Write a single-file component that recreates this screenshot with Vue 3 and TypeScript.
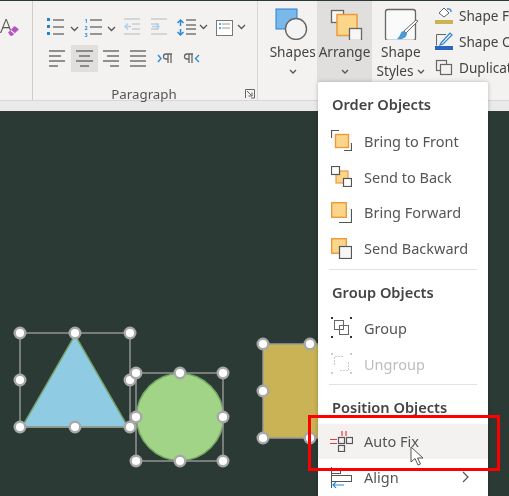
<script setup lang="ts">
type Pt = [number, number];

const handles: Pt[] = [
  [20, 333], [75, 333], [130, 333], [20, 380], [130, 380], [20, 427], [75, 427], [130, 427],
  [136, 373], [180, 373], [223, 373], [136, 417], [223, 417], [136, 461], [180, 461], [223, 461],
  [263, 344], [310, 344], [263, 391], [263, 438], [310, 438],
];

const alignRows: { active?: boolean; lines: [number, number][] }[] = [
  { lines: [[5, 21], [5, 17], [5, 21], [5, 14]] },
  { active: true, lines: [[5, 22], [8, 19], [5, 22], [9, 18]] },
  { lines: [[5, 21], [9, 21], [5, 21], [12, 21]] },
  { lines: [[5, 21], [5, 21], [5, 21], [5, 21]] },
];
</script>

<template>
  <div class="page">
    <header class="ribbon">
      <div class="font-stub">
        <span class="big-a">A</span>
        <svg class="eraser" width="13" height="13" viewBox="0 0 12 12">
          <path d="M1 7 7 1l4 3-6 6H3z" fill="#b455c4" />
          <path d="M3.500 5 7 8" stroke="#fff" stroke-width="1" />
        </svg>
      </div>

      <section class="para">
        <div class="para-row top">
          <svg width="37" height="24" viewBox="0 0 37 24">
            <path d="M3 6h3v3H3zM3 13h3v3H3zM3 20h3v3H3z" fill="#1f86d6" transform="translate(0 -3)" />
            <path d="M9 5h11M9 12h11M9 19h11" stroke="#777" stroke-width="1.600" />
            <path d="M27 12l3.500 3.500L34 12" class="chev" />
          </svg>
          <svg width="37" height="24" viewBox="0 0 37 24">
            <text x="3.500" y="7.500" class="digit">1</text>
            <text x="3.500" y="14.500" class="digit">2</text>
            <text x="3.500" y="21.500" class="digit">3</text>
            <path d="M9 5h12M9 12h12M9 19h12" stroke="#777" stroke-width="1.600" />
            <path d="M27 12l3.500 3.500L34 12" class="chev" />
          </svg>
          <svg width="28" height="24" viewBox="0 0 28 24">
            <path d="M6 4h16M14 9h8M14 14h8M6 19h16" stroke="#ccc" stroke-width="1.600" />
            <path d="M13 11.500H7M10 8.500l-3 3 3 3" stroke="#a9d2f0" stroke-width="1.500" fill="none" />
          </svg>
          <svg width="28" height="24" viewBox="0 0 28 24">
            <path d="M5 4h16M5 9h8M5 14h8M5 19h16" stroke="#ccc" stroke-width="1.600" />
            <path d="M6 11.500h7M10 8.500l3 3-3 3" stroke="#a9d2f0" stroke-width="1.500" fill="none" />
          </svg>
          <svg width="37" height="24" viewBox="0 0 37 24">
            <path d="M6.500 5v6M6.500 14v6M3.500 8l3-3 3 3M3.500 17l3 3 3-3" stroke="#2a8bd8" stroke-width="1.500" fill="none" />
            <path d="M12 5h10M12 10h10M12 14h10M12 19h10" stroke="#777" stroke-width="1.600" />
            <path d="M26 10l3.500 3.500L33 10" class="chev" />
          </svg>
          <svg width="37" height="24" viewBox="0 0 37 24">
            <rect x="5.500" y="5.500" width="16" height="15" fill="#fff" stroke="#777" />
            <path d="M8 9h2M8 13h2" stroke="#2a8bd8" stroke-width="1.500" />
            <path d="M11 9h8M11 13h8" stroke="#999" />
            <path d="M27 10l3.500 3.500L34 10" class="chev" />
          </svg>
        </div>

        <div class="para-row">
          <div v-for="(row, i) in alignRows" :key="i" class="align-btn" :class="{ active: row.active }">
            <svg width="27" height="27" viewBox="0 0 27 27">
              <path
                v-for="(l, n) in row.lines"
                :key="n"
                :d="`M${l[0]} ${6 + n * 5}H${l[1]}`"
                stroke="#666"
                stroke-width="1.400"
              />
            </svg>
          </div>
          <div class="align-btn">
            <svg width="27" height="27" viewBox="0 0 27 27">
              <path d="M6 10l3 3.500-3 3.500" stroke="#2a8bd8" stroke-width="1.400" fill="none" />
              <path d="M16 9v9M19 9v9M20 9h-6a2.500 2.500 0 0 0 0 5h2" stroke="#666" stroke-width="1.300" fill="none" />
            </svg>
          </div>
          <div class="align-btn">
            <svg width="27" height="27" viewBox="0 0 27 27">
              <path d="M10 9v9M13 9v9M14 9H8a2.500 2.500 0 0 0 0 5h2" stroke="#666" stroke-width="1.300" fill="none" />
              <path d="M20 10l-3.500 3.500L20 17" stroke="#2a8bd8" stroke-width="1.400" fill="none" />
            </svg>
          </div>
        </div>

        <div class="para-label">Paragraph</div>
        <svg class="launcher" width="10" height="10" viewBox="0 0 10 10">
          <path d="M.5 9V.5H9.500V9H6M2 2l5 5M7 3.500V7H3.500" stroke="#666" fill="none" />
        </svg>
      </section>

      <section class="drawing">
        <div class="big-btn shapes">
          <svg width="36" height="36" viewBox="0 0 36 36">
            <rect x="1" y="5" width="21" height="20" fill="#79b8ea" stroke="#2a80cc" />
            <circle cx="21" cy="25" r="10.500" fill="#f4f4f4" stroke="#666" stroke-width="1.400" />
          </svg>
          <span>Shapes</span>
          <svg class="small-chev" width="8" height="6" viewBox="0 0 8 6"><path d="M1 1l3 3 3-3" class="chev" /></svg>
        </div>

        <div class="big-btn arrange">
          <svg width="36" height="36" viewBox="0 0 36 36">
            <rect x="4.500" y="6.500" width="12" height="12" fill="#f7f7f7" stroke="#666" stroke-width="1.300" />
            <rect x="10" y="10.500" width="20" height="21" fill="#fbd68a" stroke="#ee9a3a" stroke-width="1.500" />
            <rect x="22.500" y="24.500" width="12" height="12" fill="#f7f7f7" stroke="#666" stroke-width="1.300" />
          </svg>
          <span>Arrange</span>
          <svg class="small-chev" width="8" height="6" viewBox="0 0 8 6"><path d="M1 1l3 3 3-3" class="chev" /></svg>
        </div>

        <div class="big-btn styles">
          <svg width="44" height="36" viewBox="0 0 44 36">
            <rect x="6.500" y="5.500" width="30" height="31" rx="2.500" fill="#fafafa" stroke="#666" stroke-width="1.300" />
            <path d="M39 17 27 29l-2-2 12-11z" fill="#fff" stroke="#666" />
            <path d="M25 27c-4 0-3 5-7 8 5 1 10-1 10-6z" fill="#4a9ad8" />
          </svg>
          <span>Shape</span>
          <span class="styles-line">Styles
            <svg width="8" height="6" viewBox="0 0 8 6"><path d="M1 1l3 3 3-3" class="chev" /></svg>
          </span>
        </div>

        <ul class="side-list">
          <li>
            <svg width="19" height="20" viewBox="0 0 19 20">
              <path d="M4 8l5-5 5 5-5 4z" fill="#fff" stroke="#666" />
              <path d="M12 4q4-1 4 3" fill="none" stroke="#2a80cc" stroke-width="1.300" />
              <rect x="0" y="15" width="18" height="4" fill="#c9b354" />
            </svg>
            <span>Shape Fill</span>
          </li>
          <li>
            <svg width="19" height="20" viewBox="0 0 19 20">
              <path d="M1.500 14.500V3.500H11" fill="none" stroke="#666" />
              <path d="M6 12 15 2l2 2-9 9-3 1z" fill="#fff" stroke="#2a80cc" stroke-width="1.200" />
              <rect x="0" y="15" width="18" height="4" fill="#2d65c4" />
            </svg>
            <span>Shape Outline</span>
          </li>
          <li>
            <svg width="19" height="20" viewBox="0 0 19 20">
              <rect x="1.500" y="3.500" width="10" height="10" fill="none" stroke="#666" stroke-width="1.200" />
              <rect x="5.500" y="7.500" width="11" height="10" fill="#f3f2f1" stroke="#666" stroke-width="1.200" />
            </svg>
            <span>Duplicate</span>
          </li>
        </ul>
      </section>
    </header>
    <div class="ribbon-foot"></div>

    <main class="canvas">
      <svg class="slide" width="509" height="496" viewBox="0 0 509 496">
        <path d="M75 335 22 427h106z" fill="#8fcbe2" stroke="#75a068" stroke-width="1.500" />
        <circle cx="180" cy="417" r="43.500" fill="#a1d486" stroke="#74a862" stroke-width="1.500" />
        <rect x="263" y="344" width="70" height="94" fill="#c9b354" />
        <g fill="none" stroke="#9a9a9a" stroke-width="1.400">
          <rect x="20" y="333" width="110" height="94" />
          <rect x="136" y="373" width="87" height="88" />
          <path d="M318 344H263V438H318" />
        </g>
        <circle
          v-for="(h, i) in handles"
          :key="i"
          :cx="h[0]"
          :cy="h[1]"
          r="5.300"
          fill="#fff"
          stroke="#a8a8a8"
          stroke-width="2.400"
        />
      </svg>
    </main>

    <nav class="menu">
      <h4 class="first">Order Objects</h4>
      <div class="item">
        <svg width="21" height="21" viewBox="0 0 21 21">
          <path d="M.5 8V.5H8M20.500 13v7.500H13" fill="none" stroke="#555" stroke-width="1.200" />
          <rect x="4.500" y="4.500" width="13" height="13" fill="#fbd68a" stroke="#ee9a3a" stroke-width="1.400" />
        </svg>
        <span>Bring to Front</span>
      </div>
      <div class="item">
        <svg width="21" height="21" viewBox="0 0 21 21">
          <rect x="5" y="5" width="12" height="12" fill="#fbd68a" stroke="#ee9a3a" stroke-width="1.200" />
          <rect x=".5" y=".5" width="8" height="8" fill="#fff" stroke="#555" stroke-width="1.200" />
          <rect x="12.500" y="12.500" width="8" height="8" fill="#fff" stroke="#555" stroke-width="1.200" />
        </svg>
        <span>Send to Back</span>
      </div>
      <div class="item">
        <svg width="21" height="21" viewBox="0 0 21 21">
          <path d="M20.500 7v13.500H8" fill="none" stroke="#555" stroke-width="1.200" />
          <rect x=".7" y=".7" width="14.600" height="14.600" fill="#fbd68a" stroke="#ee9a3a" stroke-width="1.400" />
        </svg>
        <span>Bring Forward</span>
      </div>
      <div class="item">
        <svg width="21" height="21" viewBox="0 0 21 21">
          <rect x=".7" y=".7" width="14.600" height="14.600" fill="#fbd68a" stroke="#ee9a3a" stroke-width="1.400" />
          <rect x="8.500" y="8.500" width="12" height="12" fill="#f6f6f6" stroke="#555" stroke-width="1.200" />
        </svg>
        <span>Send Backward</span>
      </div>
      <hr class="sep-a" />

      <h4 class="second">Group Objects</h4>
      <div class="item">
        <svg width="21" height="21" viewBox="0 0 21 21">
          <rect x="3.500" y="3.500" width="9" height="9" fill="none" stroke="#666" />
          <rect x="8.500" y="8.500" width="9" height="9" fill="none" stroke="#666" />
          <path d="M0 0h2v2H0zM19 0h2v2h-2zM0 19h2v2H0zM19 19h2v2h-2z" fill="#333" />
        </svg>
        <span>Group</span>
      </div>
      <div class="item disabled">
        <svg width="21" height="21" viewBox="0 0 21 21">
          <path d="M3.500 12V3.500H12M9 17.500h8.500V9" fill="none" stroke="#ccc" stroke-dasharray="2 1" />
          <path d="M0 0h2v2H0zM19 0h2v2h-2zM0 19h2v2H0zM19 19h2v2h-2z" fill="#ccc" />
        </svg>
        <span>Ungroup</span>
      </div>
      <hr class="sep-b" />

      <h4 class="third">Position Objects</h4>
      <div class="item hover">
        <svg class="wide" width="23" height="21" viewBox="0 0 23 21">
          <path d="M0 8.500h7M0 12.500h7M12 0v5M16 0v5" stroke="#f03a3a" stroke-width="1.200" />
          <rect x="8.500" y="6.500" width="6" height="6" fill="none" stroke="#555" stroke-width="1.200" />
          <rect x="16.500" y="6.500" width="6" height="6" fill="none" stroke="#555" stroke-width="1.200" />
          <rect x="8.500" y="14.500" width="6" height="6" fill="none" stroke="#555" stroke-width="1.200" />
        </svg>
        <span>Auto Fix</span>
      </div>
      <div class="item">
        <svg class="wide" width="23" height="21" viewBox="0 0 23 21">
          <path d="M1.500 0v21" stroke="#555" />
          <rect x="1.500" y="2.500" width="9" height="4" fill="none" stroke="#555" />
          <rect x="1.500" y="8.500" width="20" height="6" fill="none" stroke="#555" />
          <path d="M14 18H3M6 15l-3 3 3 3" stroke="#2a8bd8" fill="none" stroke-width="1.200" />
        </svg>
        <span class="grow">Align</span>
        <svg class="more" width="8" height="12" viewBox="0 0 8 12"><path d="M1 1l5 5-5 5" fill="none" stroke="#555" stroke-width="1.200" /></svg>
      </div>
    </nav>

    <div class="red-box"></div>
    <svg class="pointer" width="14" height="21" viewBox="0 0 14 21">
      <path d="M1 1v15l4-3.500L8 19l2.500-1-3-6H13z" fill="#fff" stroke="#555" />
    </svg>
  </div>
</template>

<style scoped>
.page {
  position: relative;
  width: 509px;
  height: 496px;
  overflow: hidden;
  display: flex;
  flex-direction: column;
  background: #2b3a34;
  font-family: "Noto Sans", "Open Sans", sans-serif;
  color: #444;
  filter: blur(0.35px);
}

.ribbon {
  display: flex;
  height: 99px;
  margin-top: 1px;
  background: #f3f2f1;
  flex-shrink: 0;
}

.ribbon-foot {
  height: 10px;
  background: #ebeaea;
  border-top: 1px solid #d9d8d7;
  flex-shrink: 0;
}

.font-stub {
  position: relative;
  width: 33px;
  flex-shrink: 0;
  border-right: 1px solid #cfcecd;
  box-sizing: border-box;
  overflow: hidden;
}

.big-a {
  position: absolute;
  left: 0;
  top: 13px;
  font-size: 20px;
  line-height: 24px;
  font-weight: 300;
  color: #555;
}

.eraser {
  position: absolute;
  left: 7px;
  top: 24px;
}

.para {
  position: relative;
  width: 225px;
  flex-shrink: 0;
  padding: 14px 0 0 11px;
  box-sizing: border-box;
  border-right: 1px solid #d9d8d7;
}

.para-row {
  display: flex;
  height: 27px;
}

.para-row.top {
  height: 24px;
  margin-bottom: 6px;
}

.digit {
  font-size: 5.5px;
  font-weight: 700;
  fill: #2a8bd8;
}

.align-btn {
  width: 27px;
  height: 27px;
}

.align-btn.active {
  background: #e1dfdd;
}

.para-label {
  position: absolute;
  left: 0;
  right: 2px;
  bottom: -4px;
  height: 20px;
  line-height: 20px;
  text-align: center;
  font-size: 13.3px;
  color: #555;
}

.launcher {
  position: absolute;
  left: 212px;
  top: 88px;
}

.drawing {
  display: flex;
  padding-left: 10px;
  font-size: 13.6px;
  line-height: 19px;
  min-width: 0;
}

.big-btn {
  display: flex;
  flex-direction: column;
  align-items: center;
  height: 81px;
  padding-top: 3px;
  box-sizing: border-box;
}

.big-btn > svg:first-child {
  margin-bottom: 2px;
}

.shapes {
  width: 50px;
}

.arrange {
  width: 55px;
  background: #e1dfdd;
}

.styles {
  width: 55px;
  margin-left: 2px;
}

.small-chev {
  margin-top: 8px;
}

.styles-line {
  white-space: nowrap;
}

.styles-line svg {
  vertical-align: 1px;
}

.side-list {
  list-style: none;
  margin: 0;
  padding: 1px 0 0 7px;
  min-width: 0;
  width: 75px;
  overflow: hidden;
}

.side-list li {
  display: flex;
  align-items: center;
  gap: 5px;
  height: 26px;
  white-space: nowrap;
}

.side-list svg {
  flex-shrink: 0;
}

.chev {
  fill: none;
  stroke: #555;
  stroke-width: 1.300;
}

.canvas {
  flex: 1;
  min-height: 0;
}

.slide {
  position: absolute;
  left: 0;
  top: 0;
}

.menu {
  position: absolute;
  left: 318px;
  top: 82px;
  width: 170px;
  height: 420px;
  padding-top: 5px;
  box-sizing: border-box;
  background: #fff;
  border-radius: 2px 2px 0 0;
  box-shadow: 0 0 4px rgba(0, 0, 0, 0.25);
  font-size: 14.5px;
  color: #555;
}

.menu h4 {
  margin: 0;
  padding-left: 14px;
  font-size: 14.6px;
  font-weight: 600;
  line-height: 34px;
  color: #444;
}

.menu h4.first {
  padding-bottom: 2px;
}

.menu h4.second {
  padding-top: 5px;
  padding-bottom: 1px;
}

.menu h4.third {
  padding-top: 5px;
}

.menu hr {
  height: 1px;
  margin: 0 11px;
  border: 0;
  background: #e3e2e1;
}

.menu hr.sep-a {
  margin-top: 3px;
}

.menu hr.sep-b {
  margin-top: 2px;
}

.item {
  display: flex;
  align-items: center;
  height: 35.75px;
  padding-left: 13px;
  box-sizing: border-box;
}

.item > svg:first-child {
  flex-shrink: 0;
  margin-right: 12px;
}

.item > svg.wide {
  margin-left: -1px;
  margin-right: 11px;
}

.item.hover {
  background: #f3f2f1;
}

.item.disabled {
  color: #bdbdbd;
}

.grow {
  flex: 1;
}

.more {
  margin-right: 18px;
}

.red-box {
  position: absolute;
  left: 308px;
  top: 415px;
  width: 192px;
  height: 56px;
  border: 3px solid #f00;
  box-sizing: border-box;
}

.pointer {
  position: absolute;
  left: 410px;
  top: 446px;
}
</style>
